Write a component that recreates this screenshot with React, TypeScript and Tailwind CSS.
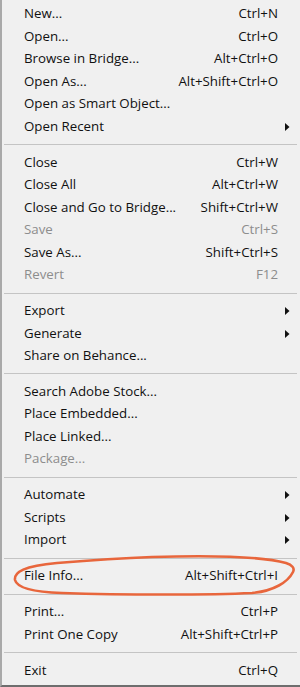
import React from "react";

type Item = { label: string; shortcut?: string; disabled?: boolean; sub?: boolean };
type Entry = Item | "sep";

const entries: Entry[] = [
  { label: "New...", shortcut: "Ctrl+N" },
  { label: "Open...", shortcut: "Ctrl+O" },
  { label: "Browse in Bridge...", shortcut: "Alt+Ctrl+O" },
  { label: "Open As...", shortcut: "Alt+Shift+Ctrl+O" },
  { label: "Open as Smart Object..." },
  { label: "Open Recent", sub: true },
  "sep",
  { label: "Close", shortcut: "Ctrl+W" },
  { label: "Close All", shortcut: "Alt+Ctrl+W" },
  { label: "Close and Go to Bridge...", shortcut: "Shift+Ctrl+W" },
  { label: "Save", shortcut: "Ctrl+S", disabled: true },
  { label: "Save As...", shortcut: "Shift+Ctrl+S" },
  { label: "Revert", shortcut: "F12", disabled: true },
  "sep",
  { label: "Export", sub: true },
  { label: "Generate", sub: true },
  { label: "Share on Behance..." },
  "sep",
  { label: "Search Adobe Stock..." },
  { label: "Place Embedded..." },
  { label: "Place Linked..." },
  { label: "Package...", disabled: true },
  "sep",
  { label: "Automate", sub: true },
  { label: "Scripts", sub: true },
  { label: "Import", sub: true },
  "sep",
  { label: "File Info...", shortcut: "Alt+Shift+Ctrl+I" },
  "sep",
  { label: "Print...", shortcut: "Ctrl+P" },
  { label: "Print One Copy", shortcut: "Alt+Shift+Ctrl+P" },
  "sep",
  { label: "Exit", shortcut: "Ctrl+Q" },
];

function Arrow() {
  return (
    <svg width="5" height="8" viewBox="0 0 5 8" className="block">
      <path d="M0 0 L4.5 4 L0 8 Z" fill="#111" />
    </svg>
  );
}

export default function App() {
  return (
    <div
      className="relative w-[300px] h-[687px] bg-[#f0f0f0] overflow-hidden border-l-2 border-l-[#a9a9a9] border-b-2 border-b-[#6e6e6e]"
      style={{ fontFamily: '"Open Sans", "Noto Sans", sans-serif' }}
    >
      <div className="pt-[3px] flex flex-col">
        {entries.map((e, i) =>
          e === "sep" ? (
            <div key={i} className="h-[13.4px] flex items-center pl-[2px] pr-[3px]">
              <div className="h-px w-full bg-[#c4c4c4]" />
            </div>
          ) : (
            <div
              key={i}
              className={`h-[22.5px] flex items-center pl-[22px] pr-[22px] text-[13.3px] ${
                e.disabled ? "text-[#8d8d8d]" : "text-[#111]"
              }`}
            >
              <span className="flex-1 whitespace-nowrap">{e.label}</span>
              {e.shortcut && <span className="whitespace-nowrap">{e.shortcut}</span>}
              {e.sub && (
                <span className="-mr-[12px]">
                  <Arrow />
                </span>
              )}
            </div>
          )
        )}
      </div>
      <svg
        className="absolute left-0 top-0 pointer-events-none"
        width="300"
        height="687"
        viewBox="0 0 300 687"
      >
        <path
          d="M150 557 C215 555 262 557 284 563 C290 565 293 568 291 572 C286 582 272 591 250 593 C210 595 120 595 60 593 C30 592 15 588 13 580 C12 572 22 566 55 563 C90 560 120 558 150 557 Z"
          fill="none"
          stroke="#e8663c"
          strokeWidth="2.6"
        />
      </svg>
    </div>
  );
}
